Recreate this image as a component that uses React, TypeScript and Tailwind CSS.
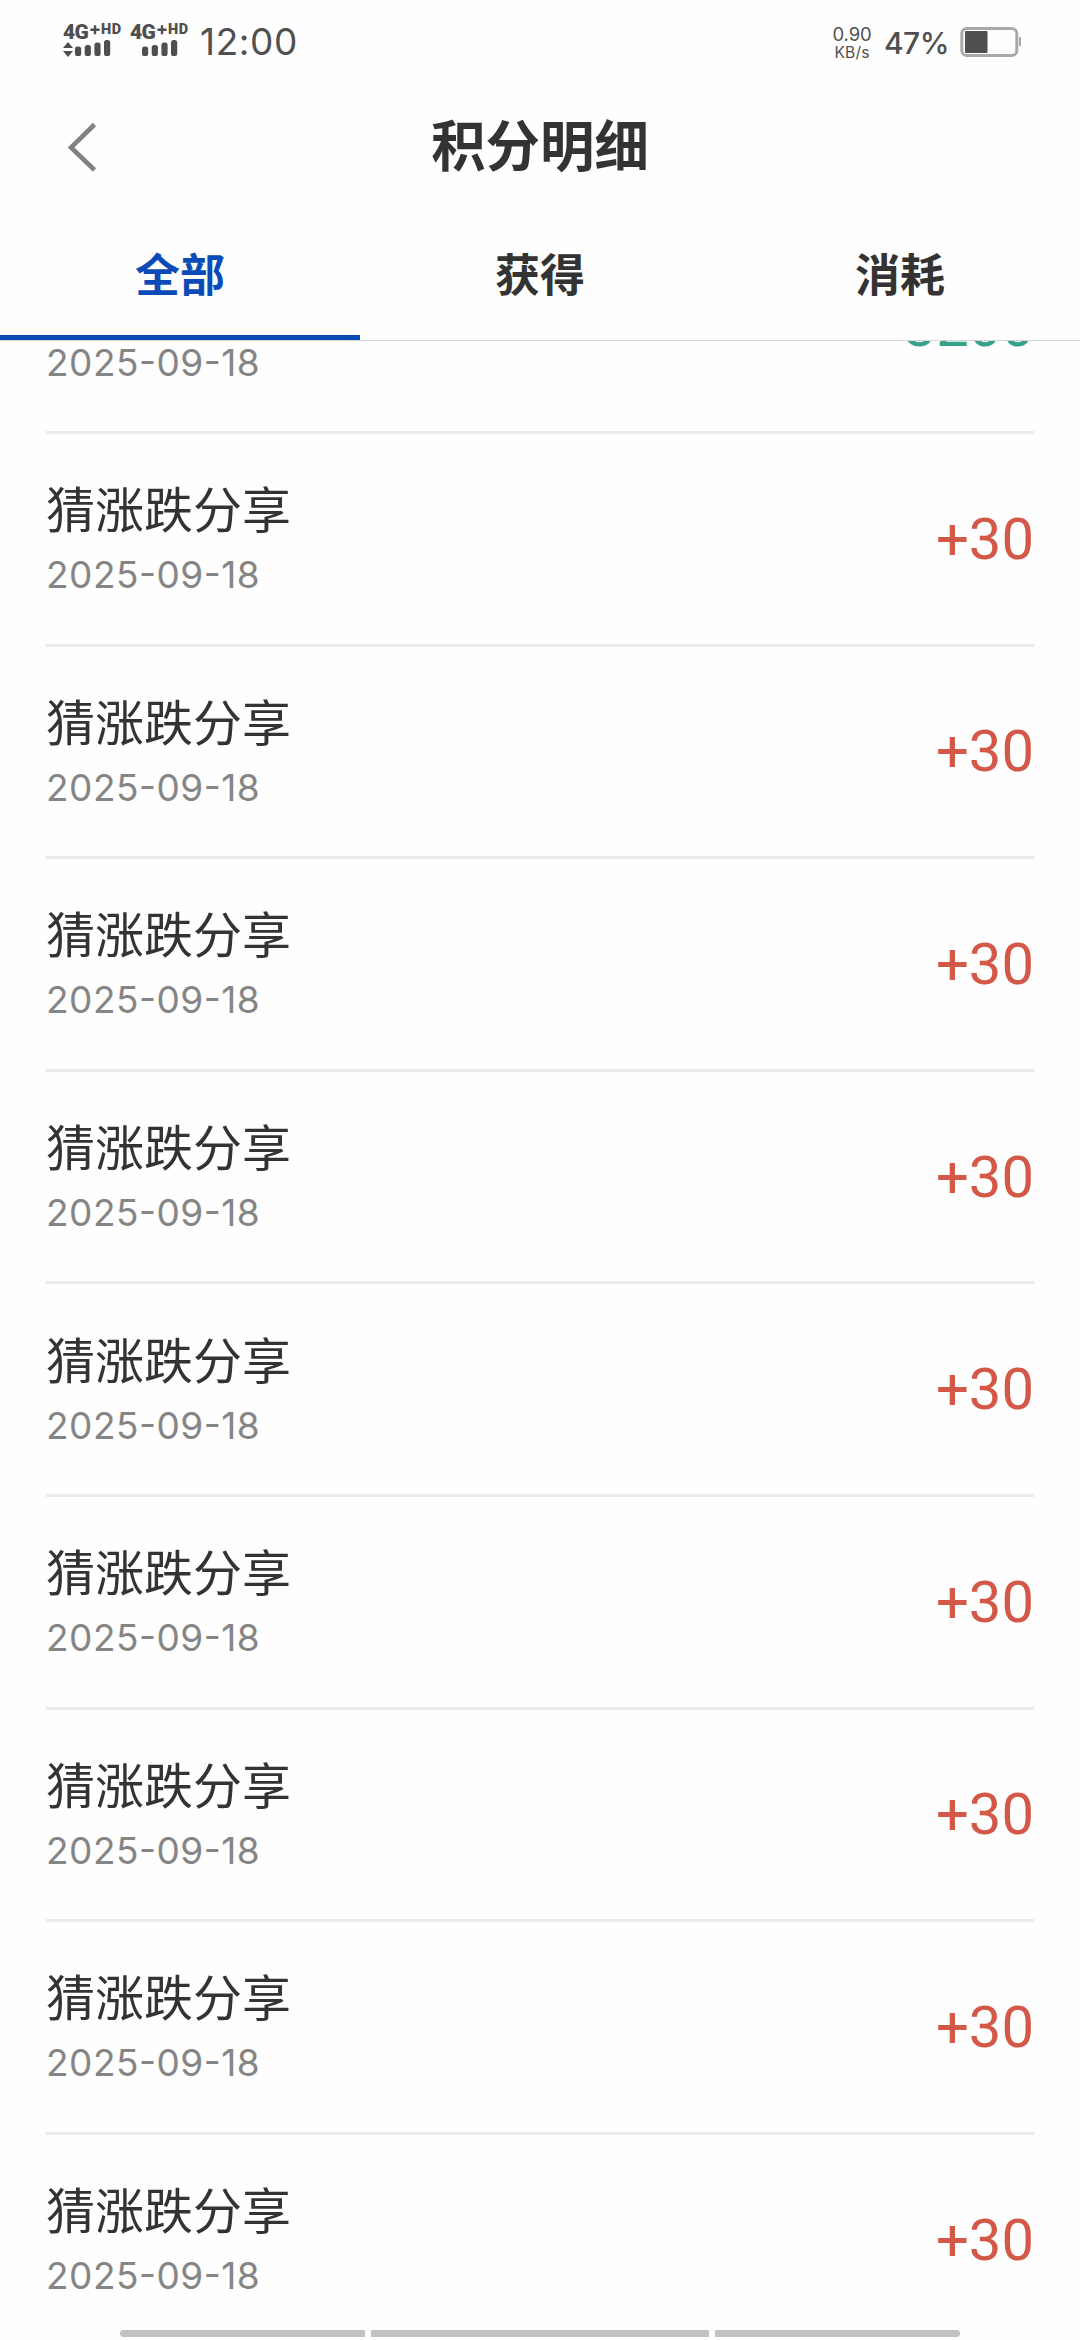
import React from "react";

type Entry = { title: string; date: string; amount: string; spent?: boolean };

const shared: Entry = { title: "猜涨跌分享", date: "2025-09-18", amount: "+30" };

const entries: Entry[] = [
  { title: "", date: "2025-09-18", amount: "-3200", spent: true },
  ...Array.from({ length: 9 }, () => shared),
];

const tabs = ["全部", "获得", "消耗"];

function Signal({ arrows }: { arrows?: boolean }) {
  return (
    <div className="flex h-[36px] w-[60px] flex-col text-[#4f4f4f]">
      <div className="flex h-[16px] items-start font-['Inter'] font-bold">
        <span className="w-[26px] font-['Roboto'] text-[21px] leading-[16px] font-black tracking-[-0.6px]">4G</span>
        <svg className="mt-px ml-[0.5px] h-[10px] w-[10px]" viewBox="0 0 10 10">
          <path d="M5 0.3V9.3M0.4 4.8H9.6" stroke="currentColor" strokeWidth="2.4" />
        </svg>
        <span className="ml-[1.5px] font-['Roboto'] text-[14.5px] leading-[11px] font-black tracking-[0.5px]">HD</span>
      </div>
      <svg className="h-[18px] w-[50px]" viewBox="0 0 50 18" fill="currentColor">
        {arrows && <path d="M5 2 10 8H0ZM5 17 10 11H0Z" />}
        <rect x="12" y="6.5" width="6.2" height="9.5" rx="2.6" />
        <rect x="21.7" y="5" width="6.2" height="11" rx="2.6" />
        <rect x="31.4" y="2.5" width="6.2" height="13.5" rx="2.6" />
        <rect x="41" y="0" width="6.2" height="16" rx="2.6" />
      </svg>
    </div>
  );
}

function StatusBar() {
  return (
    <div className="flex h-[84px] shrink-0 items-start justify-between pr-[58px] pl-[63px] font-['Inter'] text-[#505050]">
      <div className="flex">
        <div className="mt-[24px] flex gap-[7px]">
          <Signal arrows />
          <Signal />
        </div>
        <span className="mt-[22px] ml-[10px] text-[37px] leading-[40px] tracking-[0.6px]">12:00</span>
      </div>
      <div className="flex">
        <div className="mt-[25px] flex w-[38px] flex-col items-center">
          <span className="text-[18.5px] leading-[19px] tracking-[-0.1px]">0.90</span>
          <span className="text-[15.5px] leading-[17px] tracking-[0.2px]">KB/s</span>
        </div>
        <span className="mt-[23px] ml-[13px] w-[64px] text-[30px] leading-[40px] font-medium tracking-[-0.6px]">47%</span>
        <svg className="mt-[27px] ml-[12px] h-[30px] w-[62px]" viewBox="0 0 62 30">
          <rect x="1.8" y="1.5" width="55" height="27" rx="5" fill="none" stroke="#a9a9a9" strokeWidth="3" />
          <rect x="5" y="4" width="22.5" height="22" rx="1" fill="#505050" />
          <rect x="59" y="10" width="2" height="9" fill="#a9a9a9" />
        </svg>
      </div>
    </div>
  );
}

export default function App() {
  return (
    <div className="relative flex h-[2340px] w-[1080px] flex-col overflow-hidden bg-[#fefefe]">
      <StatusBar />

      <header className="grid h-[117px] shrink-0 grid-cols-[1fr_auto_1fr] items-center">
        <svg className="mt-[9px] ml-[68px] h-[50px] w-[30px]" viewBox="0 0 30 50" fill="none">
          <path d="M26.5 2.5 3 25.5 26.5 48" stroke="#828282" strokeWidth="4.6" />
        </svg>
        <h1 className="font-['Noto_Sans_CJK_SC',sans-serif] text-[54.4px] leading-[80px] font-bold text-[#333333]">积分明细</h1>
      </header>

      <nav className="grid h-[140px] shrink-0 grid-cols-3 border-b border-[#d4d4d4] font-['Noto_Sans_CJK_SC',sans-serif] text-[45px] font-bold text-[#333333]">
        {tabs.map((tab, i) => (
          <button
            key={tab}
            className={
              i === 0
                ? "flex items-center justify-center border-b-[5px] border-[#0a4bb8] pt-[9px] leading-[64px] text-[#0a4bb8]"
                : "flex items-center justify-center border-b-[5px] border-transparent pt-[9px] leading-[64px]"
            }
          >
            {tab}
          </button>
        ))}
      </nav>

      <main className="min-h-0 flex-1 overflow-hidden">
        <ul className="-mt-[119.6px] px-[46px]">
          {entries.map((e, i) => (
            <li key={i} className="flex h-[212.6px] items-center justify-between border-b-[3px] border-[#ebebeb]">
              <div className="flex flex-col gap-[4px] pt-[5px]">
                <span className="h-[64px] font-['Noto_Sans_CJK_SC',sans-serif] text-[49px] leading-[64px] text-[#333333]">{e.title}</span>
                <span className="font-['Inter'] text-[37px] leading-[64px] tracking-[0.5px] text-[#858585] [font-feature-settings:'case']">
                  {e.date}
                </span>
              </div>
              <span
                className={
                  e.spent
                    ? "font-['Roboto'] text-[58px] leading-[64px] text-[#37a28a]"
                    : "font-['Roboto'] text-[58px] leading-[64px] text-[#d45848]"
                }
              >
                {e.amount}
              </span>
            </li>
          ))}
        </ul>
      </main>

      <div className="absolute inset-x-[120px] bottom-[3px] grid h-[7px] grid-cols-[245px_338px_245px] justify-between">
        <i className="rounded-l-full bg-[#c2c2c2]" />
        <i className="bg-[#c2c2c2]" />
        <i className="rounded-r-full bg-[#c2c2c2]" />
      </div>
    </div>
  );
}
